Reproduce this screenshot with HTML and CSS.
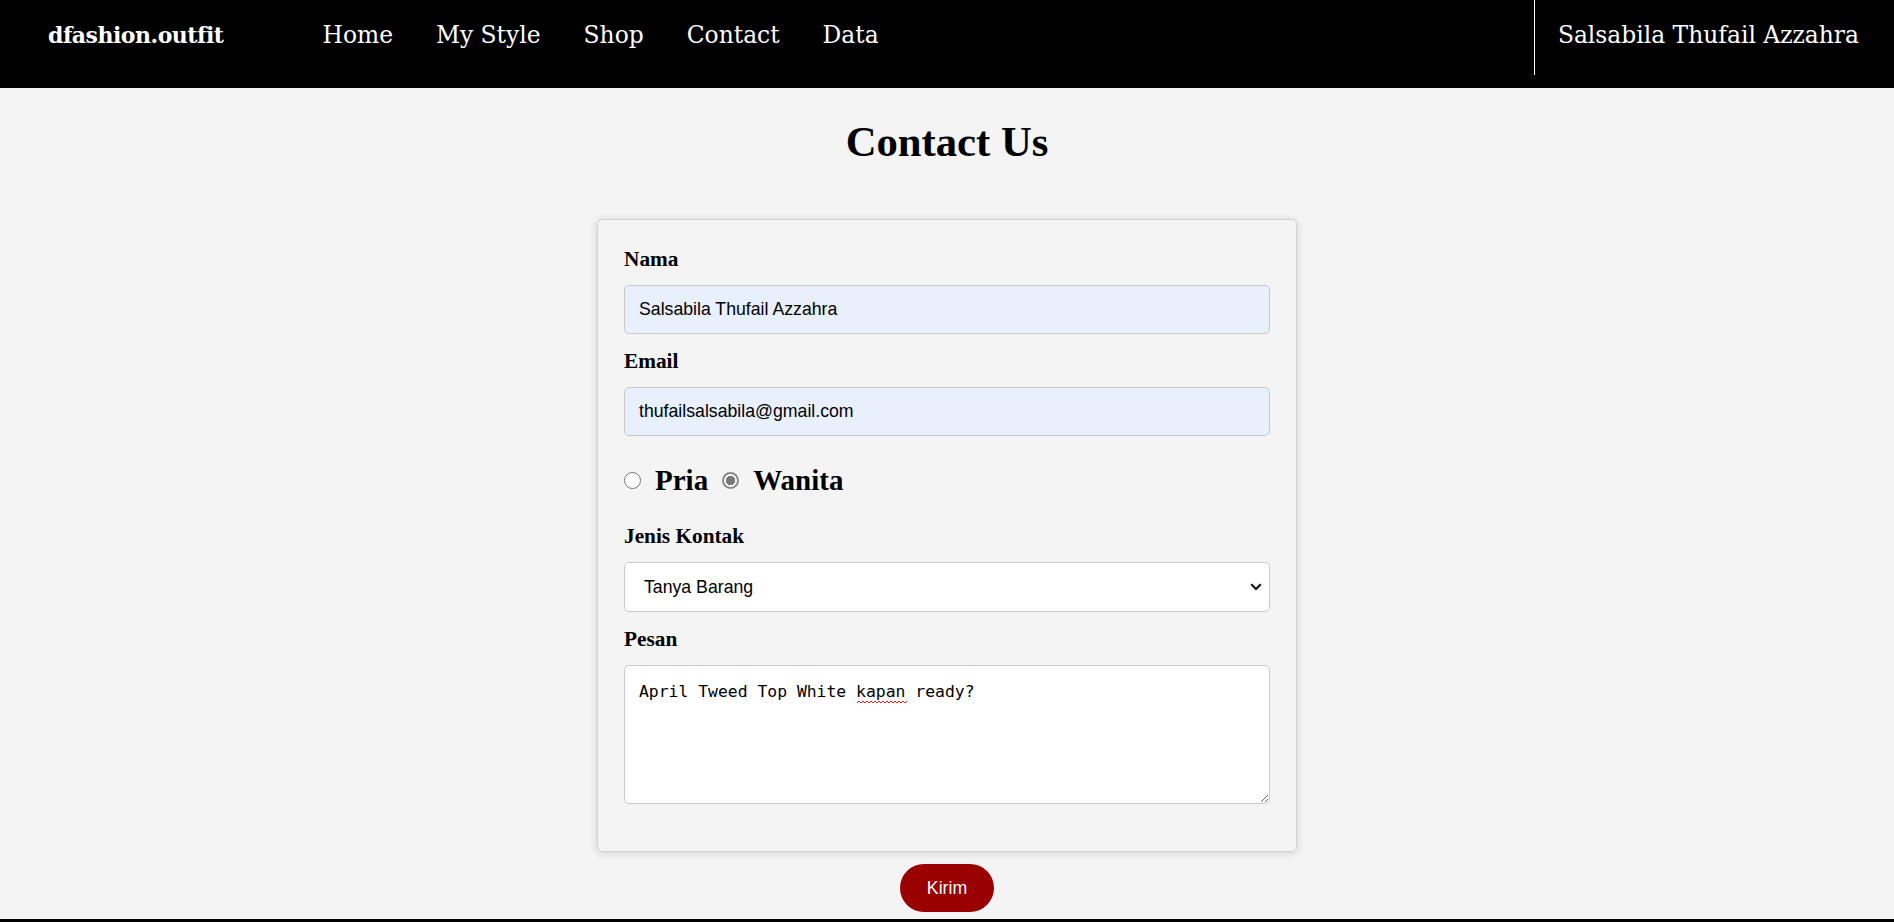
FILE: index.html
```html
<!DOCTYPE html>
<html lang="id">
<head>
<meta charset="utf-8">
<title>Contact Us - dfashion.outfit</title>
<link rel="stylesheet" href="styles.css">
</head>
<body>
<header class="nav">
  <div class="brand">dfashion.outfit</div>
  <nav class="menu">
    <a href="#">Home</a>
    <a href="#">My Style</a>
    <a href="#">Shop</a>
    <a href="#">Contact</a>
    <a href="#">Data</a>
  </nav>
  <div class="user">Salsabila Thufail Azzahra</div>
</header>

<main class="content">
  <h1 class="title">Contact Us</h1>
  <form class="card">
    <label class="field-label" for="nama">Nama</label>
    <input class="field auto" id="nama" type="text" value="Salsabila Thufail Azzahra">

    <label class="field-label" for="email">Email</label>
    <input class="field auto" id="email" type="email" value="thufailsalsabila@gmail.com">

    <div class="gender">
      <label class="opt"><input class="radio" type="radio" name="jk"> Pria</label>
      <label class="opt"><input class="radio" type="radio" name="jk" checked> Wanita</label>
    </div>

    <label class="field-label" for="jenis">Jenis Kontak</label>
    <div class="select-wrap">
      <select class="field select" id="jenis">
        <option>Tanya Barang</option>
        <option>Komplain</option>
        <option>Lainnya</option>
      </select>
      <svg class="chev" width="12" height="8" viewBox="0 0 12 8"><path d="M1.2 1.3 L6 6 L10.8 1.3" fill="none" stroke="#111" stroke-width="2.2"/></svg>
    </div>

    <label class="field-label" for="pesan">Pesan</label>
    <div class="area-wrap">
      <textarea class="field area" id="pesan" spellcheck="false">April Tweed Top White kapan ready?</textarea>
      <svg class="squiggle" width="50" height="4" viewBox="0 0 50 4"><path d="M0 3 L2 1 L4 3 L6 1 L8 3 L10 1 L12 3 L14 1 L16 3 L18 1 L20 3 L22 1 L24 3 L26 1 L28 3 L30 1 L32 3 L34 1 L36 3 L38 1 L40 3 L42 1 L44 3 L46 1 L48 3 L50 1" fill="none" stroke="#e02020" stroke-width="1"/></svg>
    </div>
  </form>
  <button class="send" type="button">Kirim</button>
</main>
<footer class="foot"></footer>
</body>
</html>
```

FILE: styles.css
```css
* { box-sizing: border-box; }

body {
  margin: 0;
  background: #f4f4f4;
  font-family: "Liberation Serif", "Times New Roman", serif;
  color: #000;
  overflow: hidden;
}

.nav {
  display: flex;
  align-items: flex-start;
  height: 88px;
  background: #000;
  padding-left: 48px;
  font-family: "DejaVu Serif", Georgia, serif;
  color: #fff;
}

.brand {
  font-weight: bold;
  font-size: 22px;
  letter-spacing: -0.5px;
  line-height: 30px;
  padding-top: 20px;
}

.menu {
  display: flex;
  gap: 43px;
  margin-left: 99px;
}

.menu a {
  color: #fff;
  text-decoration: none;
  font-size: 23.4px;
  line-height: 30px;
  padding-top: 20px;
}

.user {
  margin-left: auto;
  height: 75px;
  border-left: 1px solid #fff;
  padding: 20px 35px 0 23px;
  font-size: 23.4px;
  line-height: 30px;
}

.content {
  display: flex;
  flex-direction: column;
  align-items: center;
}

.title {
  margin: 30px 0 0;
  font-size: 42.7px;
  line-height: 47px;
  font-weight: bold;
  text-align: center;
}

.card {
  width: 700px;
  margin-top: 54px;
  padding: 27px 26px 47px;
  border: 1px solid #d2d2d2;
  border-radius: 5px;
  background: #f4f4f4;
  box-shadow: 0 1px 8px rgba(0, 0, 0, 0.14);
}

.field-label {
  display: block;
  font-size: 21.3px;
  font-weight: bold;
  line-height: 24px;
  margin-bottom: 14px;
}

.field {
  display: block;
  width: 100%;
  border: 1px solid #c9c9c9;
  border-radius: 5px;
  font-family: "Liberation Sans", Arial, sans-serif;
  font-size: 17.7px;
  color: #000;
  margin: 0 0 15px;
}

.auto {
  height: 49px;
  padding: 0 14px;
  background: #e8f0fe;
  outline: none;
}

#email { margin-bottom: 28px; }

.gender {
  display: flex;
  align-items: center;
  height: 33px;
  margin-bottom: 27px;
}

.opt {
  display: flex;
  align-items: center;
  font-size: 29px;
  font-weight: bold;
  line-height: 33px;
  margin-right: 14px;
}

.radio {
  appearance: none;
  -webkit-appearance: none;
  width: 17px;
  height: 17px;
  margin: 0 14px 0 0;
  border: 1.3px solid #767676;
  border-radius: 50%;
  background: #fff;
}

.radio:checked {
  border: 2px solid #8a8a8a;
  background: radial-gradient(circle, #7a7a7a 0 4.5px, #fff 5px);
}

.select-wrap {
  position: relative;
  margin-bottom: 15px;
}

.select {
  appearance: none;
  -webkit-appearance: none;
  height: 50px;
  padding: 0 40px 0 19px;
  background: #fff;
  margin: 0;
}

.chev {
  position: absolute;
  right: 8px;
  top: 21px;
  pointer-events: none;
}

.area-wrap {
  position: relative;
}

.area {
  height: 139px;
  padding: 16px 14px 14px;
  background: #fff;
  font-family: "DejaVu Sans Mono", "Liberation Mono", monospace;
  font-size: 16.4px;
  resize: vertical;
  margin: 0;
}

.squiggle {
  position: absolute;
  left: 233px;
  top: 35px;
  pointer-events: none;
}

.send {
  display: block;
  width: 94px;
  height: 48px;
  margin-top: 12px;
  border: none;
  border-radius: 24px;
  background: #990000;
  color: #fff;
  font-family: "Liberation Sans", Arial, sans-serif;
  font-size: 17.7px;
}

.foot {
  height: 12px;
  margin-top: 7px;
  background: #000;
}
```
